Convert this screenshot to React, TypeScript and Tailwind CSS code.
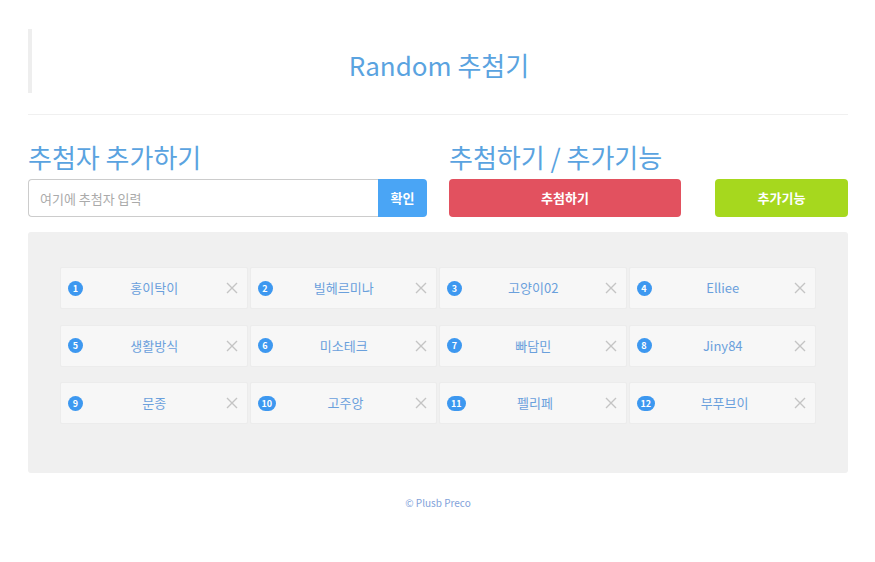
import React from 'react';

const names = [
  '홍이탁이', '빌헤르미나', '고양이02', 'Elliee',
  '생활방식', '미소테크', '빠담민', 'Jiny84',
  '문종', '고주앙', '펠리페', '부푸브이',
];

const font = { fontFamily: '"Noto Sans CJK KR", "Noto Sans", sans-serif' };

function Item({ idx, name }: { idx: number; name: string }) {
  return (
    <div className="flex items-center h-[42px] bg-[#f7f7f7] border border-[#ececec] rounded-[2px] pl-[7px] pr-[7px]">
      <span className="flex items-center justify-center h-[15px] min-w-[15px] px-[4px] rounded-full bg-[#3d98f0] text-white text-[9px] font-bold leading-none">
        {idx}
      </span>
      <span className="flex-1 text-center text-[13px] text-[#6aa0dc]">{name}</span>
      <svg width="12" height="12" viewBox="0 0 12 12" className="mr-[2px]">
        <path d="M1 1L11 11M11 1L1 11" stroke="#c4c4c4" strokeWidth="1.4" />
      </svg>
    </div>
  );
}

export default function App() {
  return (
    <div className="bg-white min-h-[562px] w-full pt-[29px]" style={font}>
      <div className="w-[820px] ml-[28px]">
        {/* Header */}
        <div className="h-[64px] border-l-4 border-[#eeeeee] flex items-center justify-center pt-[7px]">
          <h1 className="text-[26px] text-[#5aa3e0] leading-none pr-[2px]">Random 추첨기</h1>
        </div>
        <div className="mt-[21px] border-t border-[#f0f0f0]" />

        {/* Controls */}
        <div className="flex gap-[22px] mt-[28px]">
          <div className="w-[399px]">
            <h2 className="text-[26px] text-[#5aa3e0] leading-[32px] -mt-[2px]">추첨자 추가하기</h2>
            <div className="flex mt-[6px] h-[38px]">
              <input
                className="flex-1 h-full border border-[#cccccc] border-r-0 rounded-l-[4px] px-[11px] text-[13px] text-[#555] placeholder-[#aaaaaa] outline-none"
                placeholder="여기에 추첨자 입력"
                style={font}
              />
              <button className="w-[49px] h-full bg-[#4aa5f5] text-white text-[13px] font-bold rounded-r-[4px]">
                확인
              </button>
            </div>
          </div>
          <div className="w-[399px]">
            <h2 className="text-[26px] text-[#5aa3e0] leading-[32px] -mt-[2px]">추첨하기 / 추가기능</h2>
            <div className="flex justify-between mt-[6px] h-[38px]">
              <button className="w-[232px] h-full bg-[#e2515f] text-white text-[13px] font-bold rounded-[4px]">
                추첨하기
              </button>
              <button className="w-[133px] h-full bg-[#a6d81e] text-white text-[13px] font-bold rounded-[4px]">
                추가기능
              </button>
            </div>
          </div>
        </div>

        {/* List panel */}
        <div className="mt-[15px] bg-[#f0f0f0] rounded-[3px] pt-[35px] pb-[49px] px-[32px]">
          <div className="grid grid-cols-4 gap-x-[2px] gap-y-[15.5px]">
            {names.map((n, i) => (
              <Item key={n} idx={i + 1} name={n} />
            ))}
          </div>
        </div>

        {/* Footer */}
        <div className="text-center text-[10px] text-[#7fa2da] mt-[22px]">© Plusb Preco</div>
      </div>
    </div>
  );
}
